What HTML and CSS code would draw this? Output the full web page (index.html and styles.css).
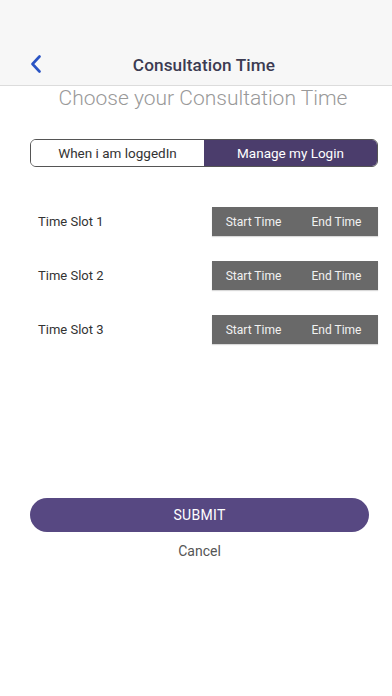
FILE: index.html
```html
<!DOCTYPE html>
<html>
<head>
<meta charset="utf-8">
<link rel="stylesheet" href="styles.css">
</head>
<body>
<div class="screen">
  <header class="header">
    <div class="nav">
      <span class="back">
        <svg width="12" height="18" viewBox="0 0 12 18"><path d="M9.5 1.5 L2.5 9 L9.5 16.5" fill="none" stroke="#2a54c4" stroke-width="2.6" stroke-linecap="round" stroke-linejoin="round"/></svg>
      </span>
      <h1 class="title">Consultation Time</h1>
    </div>
  </header>
  <h2 class="subtitle">Choose your Consultation Time</h2>
  <div class="segment">
    <div class="seg seg-off">When i am loggedIn</div>
    <div class="seg seg-on">Manage my Login</div>
  </div>
  <div class="slots">
    <div class="slot">
      <span class="slot-label">Time Slot 1</span>
      <div class="slot-box"><span>Start Time</span><span>End Time</span></div>
    </div>
    <div class="slot">
      <span class="slot-label">Time Slot 2</span>
      <div class="slot-box"><span>Start Time</span><span>End Time</span></div>
    </div>
    <div class="slot">
      <span class="slot-label">Time Slot 3</span>
      <div class="slot-box"><span>Start Time</span><span>End Time</span></div>
    </div>
  </div>
  <div class="actions">
    <button class="submit">SUBMIT</button>
    <div class="cancel">Cancel</div>
  </div>
</div>
</body>
</html>
```
FILE: styles.css
```css
* { box-sizing: border-box; }
html, body { margin: 0; padding: 0; background: #fff; }
body { font-family: Roboto, "Liberation Sans", sans-serif; color: #333; }
.screen { width: 392px; height: 696px; overflow: hidden; }
.header { background: #f7f7f7; padding-top: 44px; border-bottom: 1px solid #dcdcdc; }
.nav { height: 41px; display: flex; align-items: center; justify-content: center; position: relative; padding-left: 16px; }
.back { position: absolute; left: 30px; top: 11px; display: flex; }
.title { margin: 0; font-size: 17.2px; font-weight: 500; color: #3c3b52; letter-spacing: 0.1px; }
.subtitle { margin: 0; padding-left: 14px; text-align: center; font-size: 21px; line-height: 24px; font-weight: 300; color: #999; }
.segment { margin: 29px 14px 0 30px; height: 28px; display: flex; border: 1px solid #4d3f6e; border-radius: 6px; overflow: hidden; }
.seg { flex: 1; display: flex; align-items: center; justify-content: center; font-size: 13.5px; }
.seg-off { background: #fff; color: #333; border-right: none; }
.segment { border-color: #555; }
.seg-on { background: #4b3d6c; color: #fff; }
.slots { margin-top: 40px; display: flex; flex-direction: column; gap: 25px; }
.slot { display: flex; align-items: center; justify-content: space-between; padding: 0 14px 0 38px; height: 29px; }
.slot-label { font-size: 13px; color: #333; }
.slot-box { width: 166px; height: 29px; background: #696969; display: flex; box-shadow: 0 1px 1px rgba(0,0,0,0.15); }
.slot-box span { flex: 1; display: flex; align-items: center; justify-content: center; color: #f2f2f2; font-size: 12px; }
.actions { margin-top: 154px; padding: 0 23px 0 30px; display: flex; flex-direction: column; }
.submit { width: 339px; height: 34px; border: none; border-radius: 17px; background: #574882; color: #fff; font-family: inherit; font-size: 14px; letter-spacing: 0.3px; }
.cancel { margin-top: 11px; text-align: center; font-size: 14px; color: #555; }
```
